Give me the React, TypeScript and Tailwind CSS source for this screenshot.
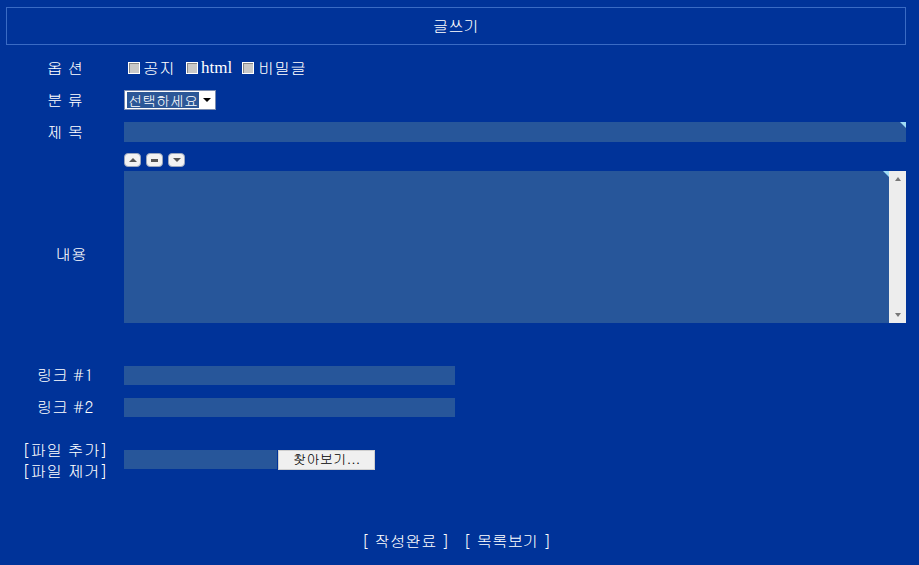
const FONT = "font-['Gulim','Noto_Sans_CJK_KR',sans-serif]";

function CheckBox() {
  return (
    <span className="inline-block w-[12px] h-[12px] border border-white bg-[#c8c8c8] shadow-[inset_1px_1px_0_#888]" />
  );
}

function Corner() {
  return (
    <span className="absolute top-0 right-0 w-0 h-0 border-t-[6px] border-l-[6px] border-t-[#9fdcf5] border-l-transparent" />
  );
}

function MiniButton({ kind }: { kind: 'up' | 'mid' | 'down' }) {
  return (
    <span className="flex items-center justify-center w-[17px] h-[14px] rounded-[4px] bg-[#f2f2f2] border border-[#9aa6bd]">
      {kind === 'up' && (
        <span className="w-0 h-0 border-l-[4px] border-r-[4px] border-b-[4px] border-l-transparent border-r-transparent border-b-[#555]" />
      )}
      {kind === 'mid' && <span className="w-[7px] h-[3px] bg-[#555]" />}
      {kind === 'down' && (
        <span className="w-0 h-0 border-l-[4px] border-r-[4px] border-t-[4px] border-l-transparent border-r-transparent border-t-[#555]" />
      )}
    </span>
  );
}

function Label({ children }: { children: React.ReactNode }) {
  return (
    <div className="w-[118px] ml-[6px] shrink-0 text-center text-white text-[15.5px]">
      {children}
    </div>
  );
}

export default function App() {
  return (
    <div className={`w-[919px] h-[565px] bg-[#003399] ${FONT} overflow-hidden`}>
      {/* Header */}
      <div className="pt-[7px] px-[6px]">
        <div className="h-[38px] w-[900px] border border-[#3a6bc4] flex items-center justify-center text-white text-[15.5px]">
          글쓰기
        </div>
      </div>

      {/* Options */}
      <div className="mt-[7px] h-[32px] flex items-center">
        <Label>옵 션</Label>
        <div className="flex items-center text-white text-[16px] pl-[4px]">
          <CheckBox />
          <span className="ml-[3px]">공지</span>
          <span className="ml-[11px]"><CheckBox /></span>
          <span className="ml-[3px] font-['Liberation_Serif',serif] text-[17px]">html</span>
          <span className="ml-[10px]"><CheckBox /></span>
          <span className="ml-[4px]">비밀글</span>
        </div>
      </div>

      {/* Category */}
      <div className="h-[32px] flex items-center">
        <Label>분 류</Label>
        <div className="w-[92px] h-[20px] bg-white border border-[#7a8cb0] flex items-center pl-[2px]">
          <span className="bg-[#2b5797] text-white text-[14px] leading-[16px] px-[1px]">선택하세요</span>
          <span className="ml-auto mr-[4px] w-0 h-0 border-l-[4px] border-r-[4px] border-t-[4px] border-l-transparent border-r-transparent border-t-black" />
        </div>
      </div>

      {/* Title */}
      <div className="h-[32px] flex items-center">
        <Label>제 목</Label>
        <div className="relative w-[782px] h-[20px] bg-[#27569a]">
          <Corner />
        </div>
      </div>

      {/* Content */}
      <div className="h-[211px] flex">
        <div className="flex items-center">
          <div className="w-[118px] ml-[6px] shrink-0 pl-[12px] text-center text-white text-[15.5px]">내용</div>
        </div>
        <div className="flex flex-col pt-[5px]">
          <div className="flex gap-[5px]">
            <MiniButton kind="up" />
            <MiniButton kind="mid" />
            <MiniButton kind="down" />
          </div>
          <div className="mt-[4px] w-[782px] h-[152px] bg-[#27569a] flex">
            <div className="relative flex-1">
              <Corner />
            </div>
            <div className="w-[17px] bg-[#ededed] flex flex-col items-center justify-between py-[6px]">
              <span className="w-0 h-0 border-l-[3px] border-r-[3px] border-b-[4px] border-l-transparent border-r-transparent border-b-[#777]" />
              <span className="w-0 h-0 border-l-[3px] border-r-[3px] border-t-[4px] border-l-transparent border-r-transparent border-t-[#777]" />
            </div>
          </div>
        </div>
      </div>

      {/* Links */}
      <div className="h-[32px] flex items-center">
        <Label>링크 #1</Label>
        <div className="w-[331px] h-[19px] bg-[#27569a]" />
      </div>
      <div className="h-[32px] flex items-center">
        <Label>링크 #2</Label>
        <div className="w-[331px] h-[19px] bg-[#27569a]" />
      </div>

      {/* Files */}
      <div className="mt-[14px] h-[45px] flex items-center">
        <div className="w-[118px] ml-[6px] shrink-0 text-center text-white text-[16px] leading-[21px]">
          <div>[파일 추가]</div>
          <div>[파일 제거]</div>
        </div>
        <div className="flex items-center">
          <div className="w-[153px] h-[19px] bg-[#27569a]" />
          <div className="ml-[1px] w-[97px] h-[20px] bg-[#f0f0f0] border border-[#cfcfcf] flex items-center justify-center text-black text-[13.5px]">
            찾아보기...
          </div>
        </div>
      </div>

      {/* Footer */}
      <div className="mt-[48px] flex justify-center text-white text-[15.5px] leading-[20px]">
        <span className="ml-[-6px]">[ 작성완료 ]</span>
        <span className="ml-[14px]">[ 목록보기 ]</span>
      </div>
    </div>
  );
}
